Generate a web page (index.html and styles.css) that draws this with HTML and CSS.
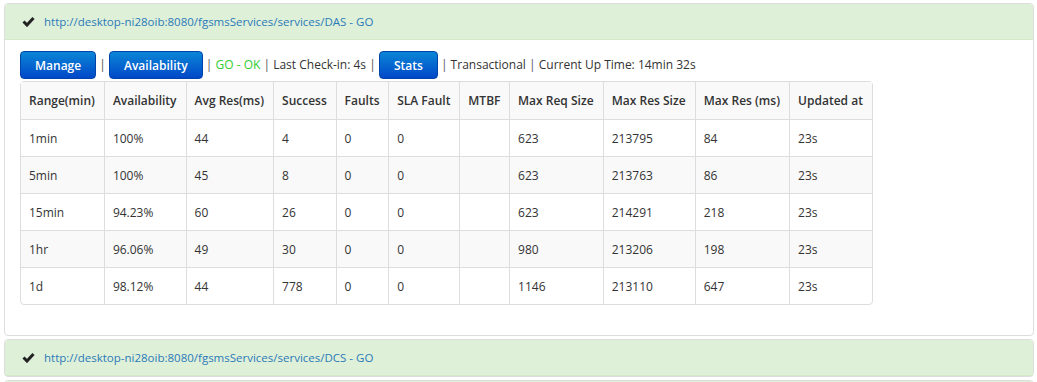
FILE: index.html
```html
<!DOCTYPE html>
<html lang="en">
<head>
    <meta charset="UTF-8">
    <title>Service Status</title>
    <link rel="stylesheet" href="styles.css">
</head>
<body>
    <div class="panel">
        <div class="panel-heading">
            <svg class="check" width="13" height="11" viewBox="0 0 13 11"><polyline points="1.5,5.5 5,9 11.5,2" fill="none" stroke="#222" stroke-width="3"/></svg>
            <a href="#">http://desktop-ni28oib:8080/fgsmsServices/services/DAS - GO</a>
        </div>
        <div class="panel-body">
            <div class="toolbar">
                <button class="btn">Manage</button> <span class="sep">|</span> <button class="btn">Availability</button> <span class="sep">|</span> <span class="status-ok">GO - OK</span> <span class="sep">|</span> Last Check-in: 4s <span class="sep">|</span> <button class="btn">Stats</button> <span class="sep">|</span> Transactional <span class="sep">|</span> Current Up Time: 14min 32s
            </div>
            <table class="stats-table">
                <thead>
                    <tr>
                        <th>Range(min)</th>
                        <th>Availability</th>
                        <th>Avg Res(ms)</th>
                        <th>Success</th>
                        <th>Faults</th>
                        <th>SLA Fault</th>
                        <th>MTBF</th>
                        <th>Max Req Size</th>
                        <th>Max Res Size</th>
                        <th>Max Res (ms)</th>
                        <th>Updated at</th>
                    </tr>
                </thead>
                <tbody>
                    <tr><td>1min</td><td>100%</td><td>44</td><td>4</td><td>0</td><td>0</td><td></td><td>623</td><td>213795</td><td>84</td><td>23s</td></tr>
                    <tr><td>5min</td><td>100%</td><td>45</td><td>8</td><td>0</td><td>0</td><td></td><td>623</td><td>213763</td><td>86</td><td>23s</td></tr>
                    <tr><td>15min</td><td>94.23%</td><td>60</td><td>26</td><td>0</td><td>0</td><td></td><td>623</td><td>214291</td><td>218</td><td>23s</td></tr>
                    <tr><td>1hr</td><td>96.06%</td><td>49</td><td>30</td><td>0</td><td>0</td><td></td><td>980</td><td>213206</td><td>198</td><td>23s</td></tr>
                    <tr><td>1d</td><td>98.12%</td><td>44</td><td>778</td><td>0</td><td>0</td><td></td><td>1146</td><td>213110</td><td>647</td><td>23s</td></tr>
                </tbody>
            </table>
        </div>
    </div>
    <div class="panel">
        <div class="panel-heading">
            <svg class="check" width="13" height="11" viewBox="0 0 13 11"><polyline points="1.5,5.5 5,9 11.5,2" fill="none" stroke="#222" stroke-width="3"/></svg>
            <a href="#">http://desktop-ni28oib:8080/fgsmsServices/services/DCS - GO</a>
        </div>
    </div>
    <div class="panel">
        <div class="panel-heading"></div>
    </div>
</body>
</html>
```

FILE: styles.css
```css
:root {
    --text-color: #333333;
    --link-color: #2a7ab8;
    --heading-background: #dff0d8;
    --heading-border: #d6e9c6;
    --panel-border: #dddddd;
    --cell-border: #dddddd;
    --stripe-background: #f9f9f9;
}

* {
    box-sizing: border-box;
}

body {
    margin: 3px 3px 0 4px;
    font-family: 'Open Sans', 'Noto Sans', sans-serif;
    font-size: 12px;
    color: var(--text-color);
    background-color: #ffffff;
}

.panel {
    border: 1px solid var(--panel-border);
    border-radius: 4px;
    margin-bottom: 3px;
    background-color: #ffffff;
}

.panel-heading {
    background-color: var(--heading-background);
    border-bottom: 1px solid var(--heading-border);
    border-radius: 3px 3px 0 0;
    padding: 8px 17px;
    height: 36px;
    display: flex;
    align-items: center;
}

.panel-heading a {
    color: var(--link-color);
    text-decoration: none;
    font-size: 11.5px;
}

.check {
    margin-right: 9px;
}

.panel-body {
    padding: 11px 15px 30px;
}

.toolbar {
    height: 30px;
    line-height: 28px;
    white-space: nowrap;
}

.sep {
    color: #555555;
}

.status-ok {
    color: #33cc33;
}

.btn {
    height: 28px;
    padding: 0 14px;
    border: 1px solid #0044aa;
    border-radius: 4px;
    background: linear-gradient(#0a86d6, #0048c8);
    color: #ffffff;
    font-family: inherit;
    font-size: 12px;
    font-weight: 600;
    vertical-align: top;
}

.stats-table {
    border-collapse: separate;
    border-spacing: 0;
    border: 1px solid var(--cell-border);
    border-radius: 4px;
    width: 853px;
}

.stats-table th,
.stats-table td {
    text-align: left;
    padding: 8px;
    height: 37px;
    border-left: 1px solid var(--cell-border);
    border-top: 1px solid var(--cell-border);
    white-space: nowrap;
}

.stats-table th:first-child,
.stats-table td:first-child {
    border-left: none;
}

.stats-table th {
    border-top: none;
    font-weight: 600;
    background-color: var(--stripe-background);
}

.stats-table tbody tr:nth-child(even) {
    background-color: var(--stripe-background);
}
```
